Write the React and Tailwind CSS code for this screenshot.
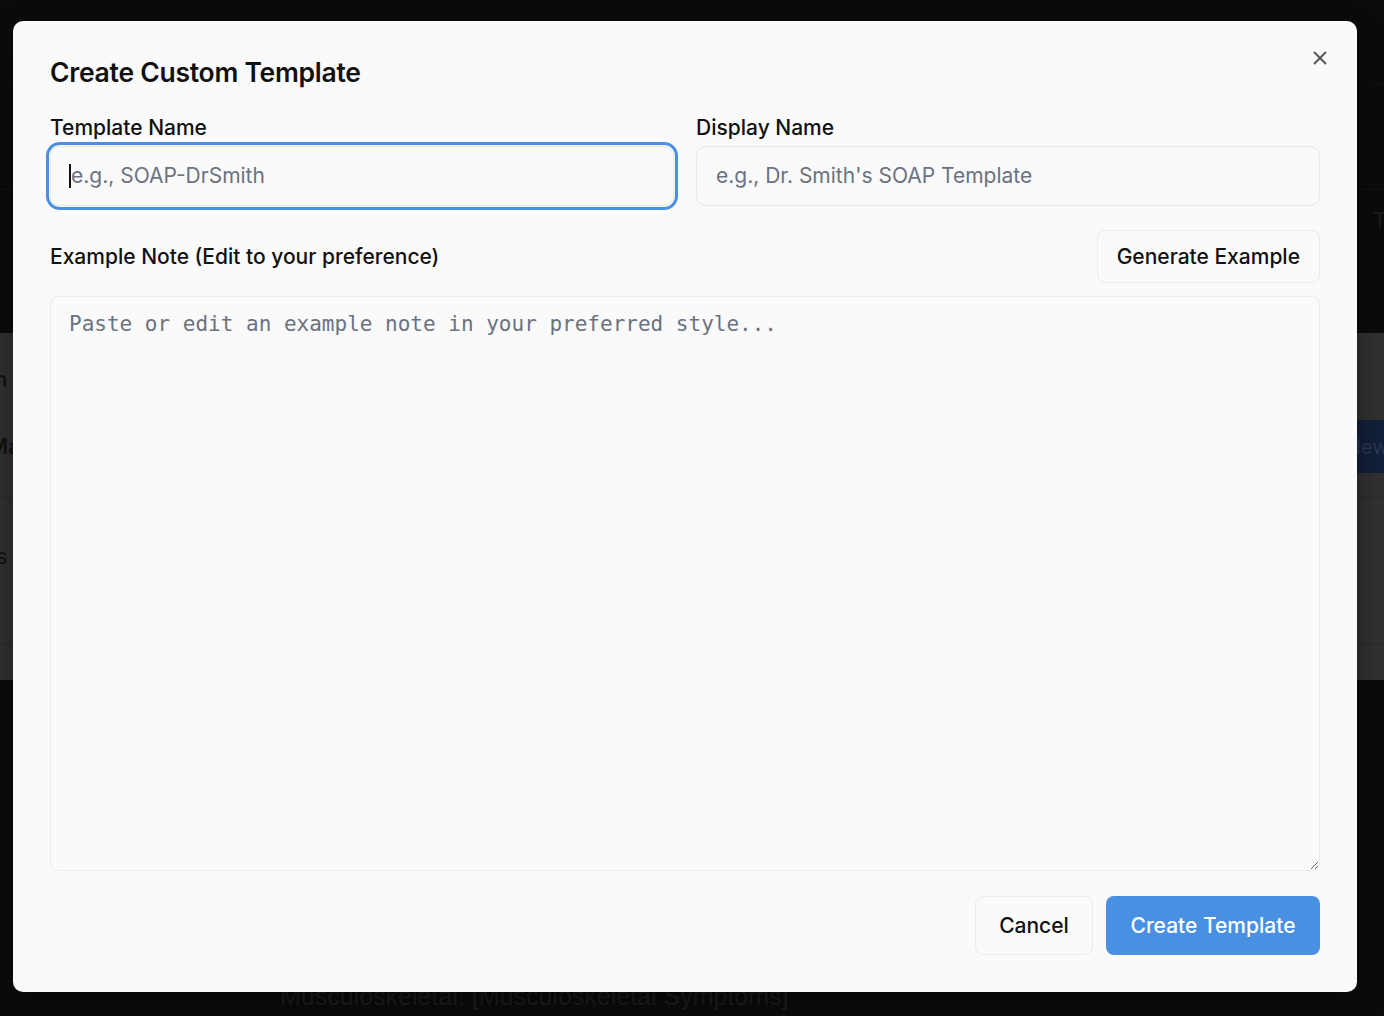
import React from "react";
import { X } from "lucide-react";

export default function App() {
  const font = { fontFamily: "Inter, 'Noto Sans', sans-serif" };
  return (
    <div className="relative h-[1016px] w-[1384px] overflow-hidden bg-[#0b0b0b]" style={font}>
      <div className="flex h-full flex-col">
        <div className="flex h-[333px] flex-col">
          <div className="h-[84px] border-b border-[#111]" />
          <div className="h-[106px] border-b border-[#111]" />
          <div className="flex justify-end pt-[14px] text-[22px] text-[#1c1c1c]">
            <span className="mr-[-10px]">Tr</span>
          </div>
        </div>
        <div className="flex h-[347px] flex-col bg-[#313131]">
          <div className="flex h-[87px] items-end text-[22px] font-medium text-[#111]">
            <span className="mb-[24px] ml-[-12px]">m</span>
          </div>
          <div className="flex h-[53px] items-center justify-between">
            <span className="ml-[-12px] text-[22px] font-semibold text-[#111]">Ma</span>
            <div className="flex h-[53px] w-[40px] items-center bg-[#13203a] pl-[2px] text-[20px] text-[#2b3750]">
              New
            </div>
          </div>
          <div className="h-[25px] border-b border-[#2a2a2a]" />
          <div className="flex h-[147px] items-start border-b border-[#2a2a2a] pt-[42px] text-[22px] text-[#111]">
            <span className="ml-[-4px]">s</span>
          </div>
          <div className="flex-1" />
        </div>
        <div className="flex-1" />
      </div>
      <div className="absolute left-[280px] top-[978px] text-[25px] text-[#1d1d1d]" style={{ fontFamily: "'Liberation Sans', Arial, sans-serif" }}>
        Musculoskeletal: [Musculoskeletal Symptoms]
      </div>

      {/* Modal */}
      <div className="absolute left-[13px] top-[21px] flex h-[971px] w-[1344px] flex-col rounded-[10px] bg-[#fafafa] px-[37px] pb-[37px] pt-[36px] shadow-[0_10px_30px_rgba(0,0,0,0.4)]">
        <button className="absolute right-[26px] top-[26px] text-[#555]">
          <X size={22} strokeWidth={2} />
        </button>
        <h2 className="text-[26.5px] font-semibold leading-[30px] tracking-[-0.01em] text-[#111]">
          Create Custom Template
        </h2>

        <div className="mt-[29px] grid grid-cols-2 gap-[22px]">
          <div className="flex flex-col">
            <label className="text-[21px] font-medium leading-[24px] text-[#111]">Template Name</label>
            <div className="mt-[6px] flex h-[60px] items-center rounded-[10px] border border-[#e8e8e8] bg-[#fafafa] pl-[18px] text-[21px] text-[#6b7280] outline-[3px] outline-offset-[1px] outline-[#4a90e2] [outline-style:solid]">
              <span className="h-[24px] w-[2px] bg-[#111]" />
              <span>e.g., SOAP-DrSmith</span>
            </div>
          </div>
          <div className="flex flex-col">
            <label className="text-[21px] font-medium leading-[24px] text-[#111]">Display Name</label>
            <div className="mt-[6px] flex h-[60px] items-center rounded-[10px] border border-[#e8e8e8] bg-[#fafafa] pl-[19px] text-[21px] text-[#6b7280]">
              e.g., Dr. Smith's SOAP Template
            </div>
          </div>
        </div>

        <div className="mt-[24px] flex items-center justify-between">
          <span className="text-[21px] font-medium leading-[24px] text-[#111]">
            Example Note (Edit to your preference)
          </span>
          <button className="h-[53px] rounded-[8px] border border-[#ebebeb] bg-[#fafafa] px-[19px] text-[21px] font-medium text-[#111]">
            Generate Example
          </button>
        </div>

        <textarea
          readOnly
          placeholder="Paste or edit an example note in your preferred style..."
          className="mt-[13px] w-full flex-1 resize-y rounded-[8px] border border-[#ebebeb] bg-[#fafafa] px-[18px] pt-[13px] text-[21px] leading-[28px] text-[#111] outline-none placeholder:text-[#6b7280]"
          style={{ fontFamily: "'DejaVu Sans Mono', 'Liberation Mono', monospace" }}
        />

        <div className="mt-[25px] flex justify-end gap-[13px]">
          <button className="h-[59px] w-[118px] rounded-[8px] border border-[#ebebeb] bg-[#fafafa] text-[21px] font-medium text-[#111]">
            Cancel
          </button>
          <button className="h-[59px] w-[214px] rounded-[8px] bg-[#4a90e2] text-[21px] font-medium text-white">
            Create Template
          </button>
        </div>
      </div>
    </div>
  );
}
